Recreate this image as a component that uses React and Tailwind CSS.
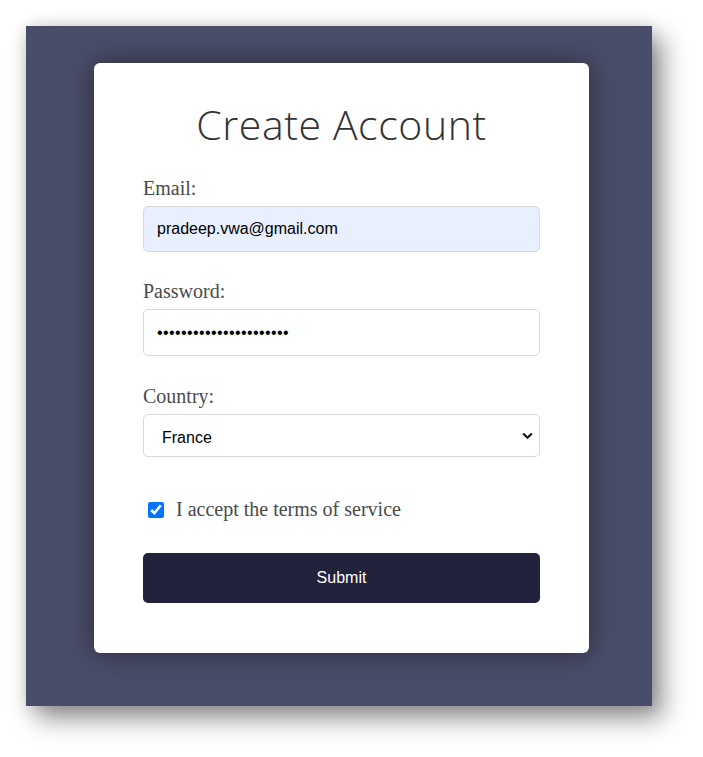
import React from "react";

export default function App() {
  return (
    <div className="min-h-[757px] w-[703px] bg-white pt-[26px] pl-[26px]">
      <div className="w-[626px] h-[680px] bg-[#4a4d69] shadow-[10px_12px_24px_rgba(0,0,0,0.45),0_0_14px_rgba(0,0,0,0.12)] pt-[37px] pl-[68px]">
        <div className="w-[495px] h-[590px] bg-white rounded-[6px] shadow-[0_0_28px_rgba(0,0,0,0.45)] px-[49px] pt-[37px]">
          <h1 className="text-center text-[41px] leading-[48px] font-light tracking-[0.6px] text-[#333333] font-['Open_Sans',sans-serif]">
            Create Account
          </h1>
          <form className="mt-[29px] font-['Liberation_Serif',serif] text-[#4a4a4a]" onSubmit={(e) => e.preventDefault()}>
            <label className="block text-[20px] leading-[23px] mb-[6px]">Email:</label>
            <input
              type="email"
              defaultValue="pradeep.vwa@gmail.com"
              className="block w-full h-[46px] rounded-[5px] border border-[#d8d8dc] bg-[#e8f0fe] pl-[13px] text-[16px] text-black font-['Liberation_Sans',Arial,sans-serif] outline-none"
            />
            <label className="block text-[20px] leading-[23px] mt-[28px] mb-[6px]">Password:</label>
            <input
              type="password"
              defaultValue="abcdefghijklmnopqrstuv"
              className="block w-full h-[47px] rounded-[5px] border border-[#d8d8dc] bg-white pl-[13px] text-[16px] tracking-[0.4px] text-black font-['Liberation_Sans',Arial,sans-serif] outline-none"
            />
            <label className="block text-[20px] leading-[23px] mt-[29px] mb-[6px]">Country:</label>
            <div className="relative">
              <select
                defaultValue="France"
                className="block w-full h-[43px] appearance-none rounded-[5px] border border-[#d8d8dc] bg-white pl-[18px] pt-[4px] text-[16px] text-black font-['Liberation_Sans',Arial,sans-serif] outline-none"
              >
                <option>France</option>
                <option>Germany</option>
                <option>India</option>
              </select>
              <svg
                className="pointer-events-none absolute right-[7px] top-[18px]"
                width="11"
                height="8"
                viewBox="0 0 11 8"
              >
                <polyline points="1.2,1.5 5.5,5.8 9.8,1.5" fill="none" stroke="#111" strokeWidth="2" />
              </svg>
            </div>
            <div className="mt-[41px] flex items-center h-[23px]">
              <input type="checkbox" defaultChecked className="ml-[5px] w-4 h-4 m-0 accent-[#0075ff]" />
              <span className="ml-[12px] text-[20px] leading-[23px]">I accept the terms of service</span>
            </div>
            <button
              type="submit"
              className="mt-[32px] block w-full h-[50px] rounded-[5px] bg-[#23223c] text-white text-[16px] font-['Liberation_Sans',Arial,sans-serif]"
            >
              Submit
            </button>
          </form>
        </div>
      </div>
    </div>
  );
}
